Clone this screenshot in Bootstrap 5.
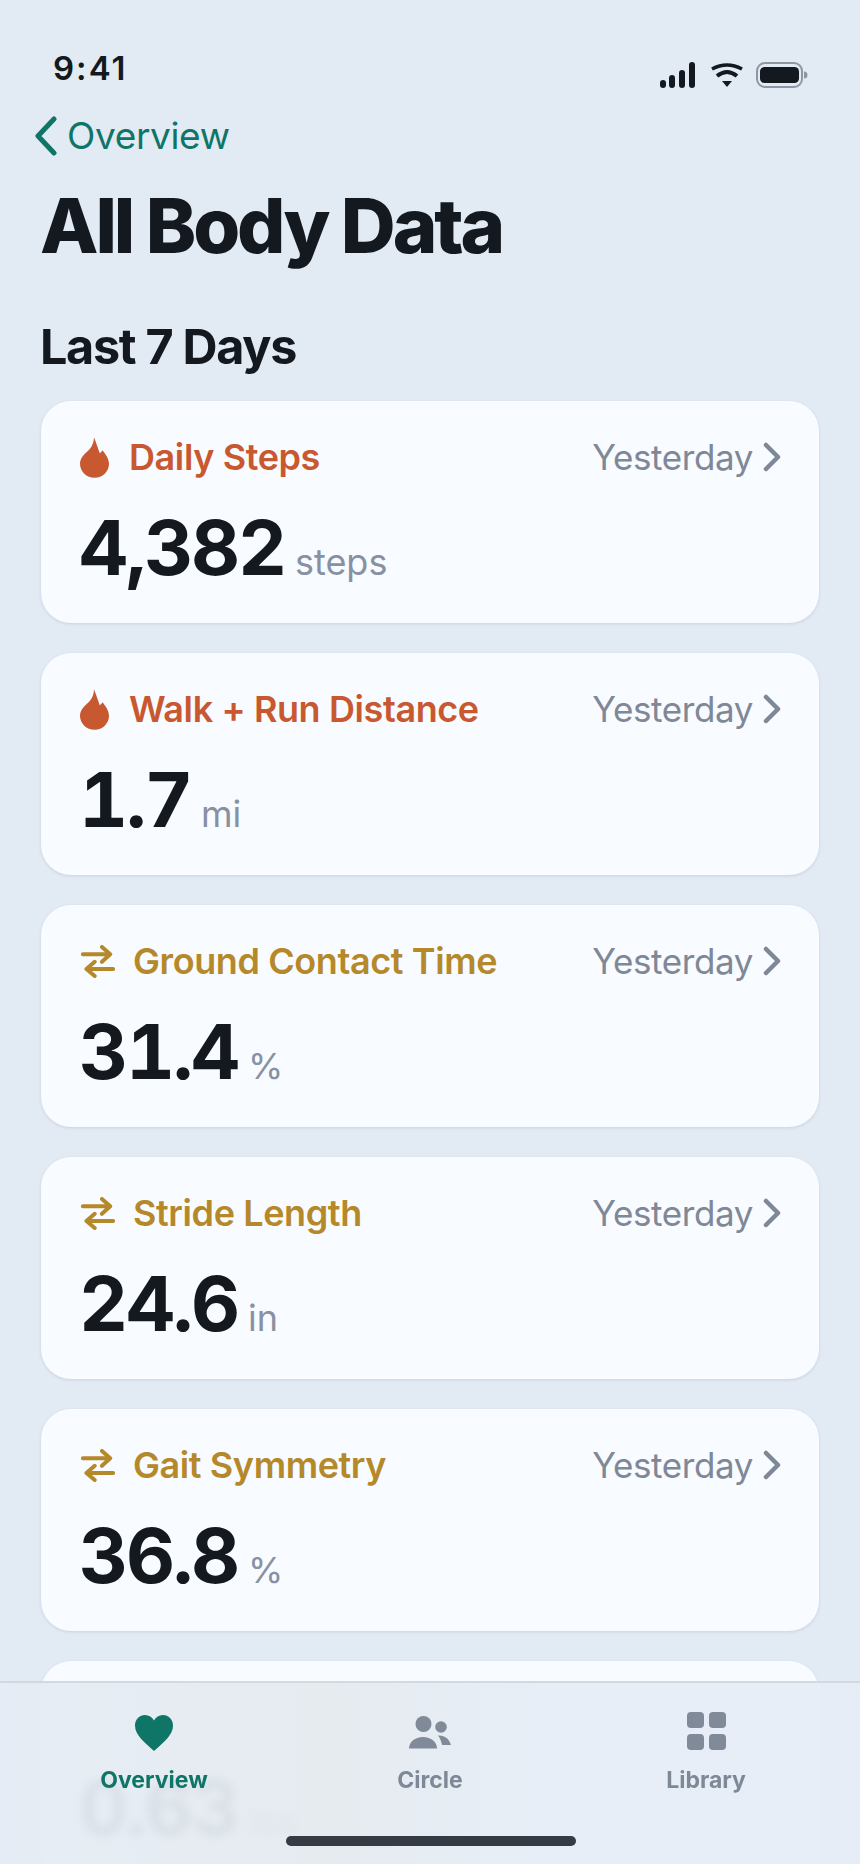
<!DOCTYPE html>
<html lang="en">
<head>
<meta charset="UTF-8">
<meta name="viewport" content="width=device-width, initial-scale=1.0">
<title>All Body Data</title>
<link href="https://cdn.jsdelivr.net/npm/bootstrap@5.3.2/dist/css/bootstrap.min.css" rel="stylesheet">
<style>
  html, body { height: 100%; }
  body {
    font-family: Inter, "Liberation Sans", sans-serif;
    background: #e2eaf4;
    color: #14181f;
    overflow: hidden;
  }
  .phone { width: 860px; height: 1864px; overflow: hidden; }
  .status-row { height: 111px; padding: 48px 51px 0 53px; }
  .clock { font-size: 33px; line-height: 40px; font-weight: 600; letter-spacing: 2px; }
  .status-icons { margin-top: 14px; }
  .back-row { height: 50px; padding-left: 34px; gap: 10px; color: #0f7566; font-size: 37px; line-height: 50px; letter-spacing: -.35px; }
  .screen-title { font-size: 76px; line-height: 92px; font-weight: 800; letter-spacing: -3.1px; margin: 18px 0 0 40px; }
  .section-title { font-size: 48.5px; line-height: 56px; font-weight: 700; letter-spacing: -1.3px; margin: 48px 0 26px 40px; }
  .metric-list { padding: 0 41px; gap: 30px; }
  .metric {
    height: 222px;
    border: 0;
    border-radius: 30px;
    background: #f8fbff;
    box-shadow: 0 1px 3px rgba(70, 90, 120, .16);
    padding: 31px 38px 0 39px;
  }
  .metric-head { height: 50px; }
  .metric-name { font-size: 36px; line-height: 50px; font-weight: 600; letter-spacing: -.4px; }
  .tone-fire { color: #c8582f; }
  .tone-gait { color: #b5882a; }
  .tone-fire .name-text { margin-left: 20px; }
  .tone-gait .name-text { margin-left: 17px; }
  .when { color: #7f8897; font-size: 35px; line-height: 50px; letter-spacing: -.4px; gap: 10px; }
  .metric-value { margin: 23px 0 0 -1px; line-height: 84px; }
  .big-num { font-size: 76px; font-weight: 700; letter-spacing: -2.2px; color: #14181f; font-variant-numeric: tabular-nums; }
  .unit { font-size: 36px; color: #8791a1; margin-left: 10px; }
  .tabbar {
    left: 0; right: 0; bottom: 0;
    height: 183px;
    background: linear-gradient(90deg, rgba(229, 236, 244, .95) 0, rgba(228, 234, 239, .95) 40%, rgba(230, 237, 246, .95) 62%);
    backdrop-filter: blur(5px);
    border-top: 2px solid #d3d9e1;
  }
  .tab-item { width: 276px; height: 100%; padding-top: 29px; color: #7f8897; font-size: 23px; font-weight: 700; }
  .tab-item.is-on { color: #0f7566; }
  .tab-icon { height: 40px; margin-bottom: 13px; }
  .tab-glyph { margin-top: 3px; }
  .tab-label { line-height: 30px; }
  .home-bar { left: 286px; bottom: 18px; width: 290px; height: 10px; background: #353a45; border-radius: 5px; }
</style>
</head>
<body>
<div class="phone position-relative">

  <div class="status-row d-flex justify-content-between">
    <div class="clock">9:41</div>
    <svg class="status-icons" width="150" height="28" viewBox="0 0 150 28">
      <g fill="#14181f">
        <rect x="1" y="18" width="6" height="8" rx="3"/>
        <rect x="10" y="13" width="6" height="13" rx="3"/>
        <rect x="20" y="8" width="6" height="18" rx="3"/>
        <rect x="30" y="0" width="6" height="26" rx="3"/>
        <path d="M63 19h10l-5 6z"/>
      </g>
      <g fill="none" stroke="#14181f">
        <path d="M53 7Q68-1 83 7" stroke-width="3.500"/>
        <path d="M58 14Q68 6 78 14" stroke-width="4"/>
      </g>
      <rect x="98" y="1" width="45" height="24" rx="8" fill="none" stroke="#8e96a3" stroke-width="2"/>
      <rect x="101" y="5" width="39" height="16" rx="4.500" fill="#14181f"/>
      <path d="M145 9.500a3.500 3.500 0 0 1 0 7z" fill="#8e96a3"/>
    </svg>
  </div>

  <div class="back-row d-flex align-items-center">
    <svg width="23" height="40" viewBox="0 0 23 40"><path d="M20 3L4 20l16 17" fill="none" stroke="#0f7566" stroke-width="5" stroke-linecap="round" stroke-linejoin="round"/></svg>
    <span>Overview</span>
  </div>

  <h1 class="screen-title">All Body Data</h1>
  <h2 class="section-title">Last 7 Days</h2>

  <div id="metrics" class="metric-list d-flex flex-column"></div>

  <nav class="tabbar position-absolute d-flex justify-content-center">
    <div class="tab-item is-on d-flex flex-column align-items-center">
      <div class="tab-icon">
        <svg class="tab-glyph" width="38" height="36" viewBox="0 0 38 36"><path d="M19 36C9 27 0 20 0 10.500 0 4.500 4.500 0 10 0c4 0 7.200 2.200 9 5.500C20.800 2.200 24 0 28 0c5.500 0 10 4.500 10 10.500C38 20 29 27 19 36z" fill="#0f7566"/></svg>
      </div>
      <div class="tab-label">Overview</div>
    </div>
    <div class="tab-item d-flex flex-column align-items-center">
      <div class="tab-icon">
        <svg class="tab-glyph" width="42" height="33" viewBox="0 0 42 33" fill="#808a98">
          <circle cx="14.500" cy="8" r="8"/>
          <circle cx="32" cy="11" r="5.800"/>
          <path d="M0 32.500c0-6.500 6-11.500 14-11.500s14 5 14 11.500z"/>
          <path d="M29 19.500c6.500-.5 11 3 13 9.500H33c-.5-3.500-2-7-4-9.500z"/>
        </svg>
      </div>
      <div class="tab-label">Circle</div>
    </div>
    <div class="tab-item d-flex flex-column align-items-center">
      <div class="tab-icon">
        <svg width="39" height="38" viewBox="0 0 39 38" fill="#808a98">
          <rect x="0" y="0" width="17" height="16" rx="4"/>
          <rect x="22" y="0" width="17" height="16" rx="4"/>
          <rect x="0" y="22" width="17" height="16" rx="4"/>
          <rect x="22" y="22" width="17" height="16" rx="4"/>
        </svg>
      </div>
      <div class="tab-label">Library</div>
    </div>
  </nav>
  <div class="home-bar position-absolute"></div>
</div>

<script>
  const flameIcon = `<svg width="29" height="41" viewBox="19 15 85 119"><path d="M60 15C66 30 72 48 77 62C80 60 83 57 85 53C96 66 104 80 104 93C104 116 85 134 62 134C38 134 19 116 19 93C19 72 36 62 47 50C56 40 60 28 60 15Z" fill="#c8582f"/></svg>`;
  const swapIcon = `<svg width="36" height="33" viewBox="12 14 108 100"><path d="M20 42H102M78 20L103 42L78 65M112 87H32M56 65L31 87L56 108" fill="none" stroke="#b5882a" stroke-width="12" stroke-linecap="round" stroke-linejoin="round"/></svg>`;
  const chevron = `<svg width="18" height="30" viewBox="0 0 18 30"><path d="M3 3l12 12L3 27" fill="none" stroke="#7f8897" stroke-width="4.500" stroke-linecap="round" stroke-linejoin="round"/></svg>`;
  const metrics = [
    { name: 'Daily Steps', value: '4,382', unit: 'steps', tone: 'fire' },
    { name: 'Walk + Run Distance', value: '1.7', unit: 'mi', tone: 'fire' },
    { name: 'Ground Contact Time', value: '31.4', unit: '%', tone: 'gait' },
    { name: 'Stride Length', value: '24.6', unit: 'in', tone: 'gait' },
    { name: 'Gait Symmetry', value: '36.8', unit: '%', tone: 'gait' },
    { value: '0.63', unit: 'lbs' } // sits under the tab bar, only the number shows through
  ];
  document.getElementById('metrics').innerHTML = metrics.map(m => `
    <div class="metric card flex-shrink-0">
      <div class="metric-head d-flex justify-content-between align-items-center">
        ${m.name ? `<div class="metric-name tone-${m.tone} d-flex align-items-center">
          ${m.tone === 'fire' ? flameIcon : swapIcon}
          <span class="name-text">${m.name}</span>
        </div>
        <div class="when d-flex align-items-center"><span>Yesterday</span>${chevron}</div>` : ''}
      </div>
      <div class="metric-value"><span class="big-num">${m.value}</span><span class="unit">${m.unit}</span></div>
    </div>`).join('');
</script>
</body>
</html>
